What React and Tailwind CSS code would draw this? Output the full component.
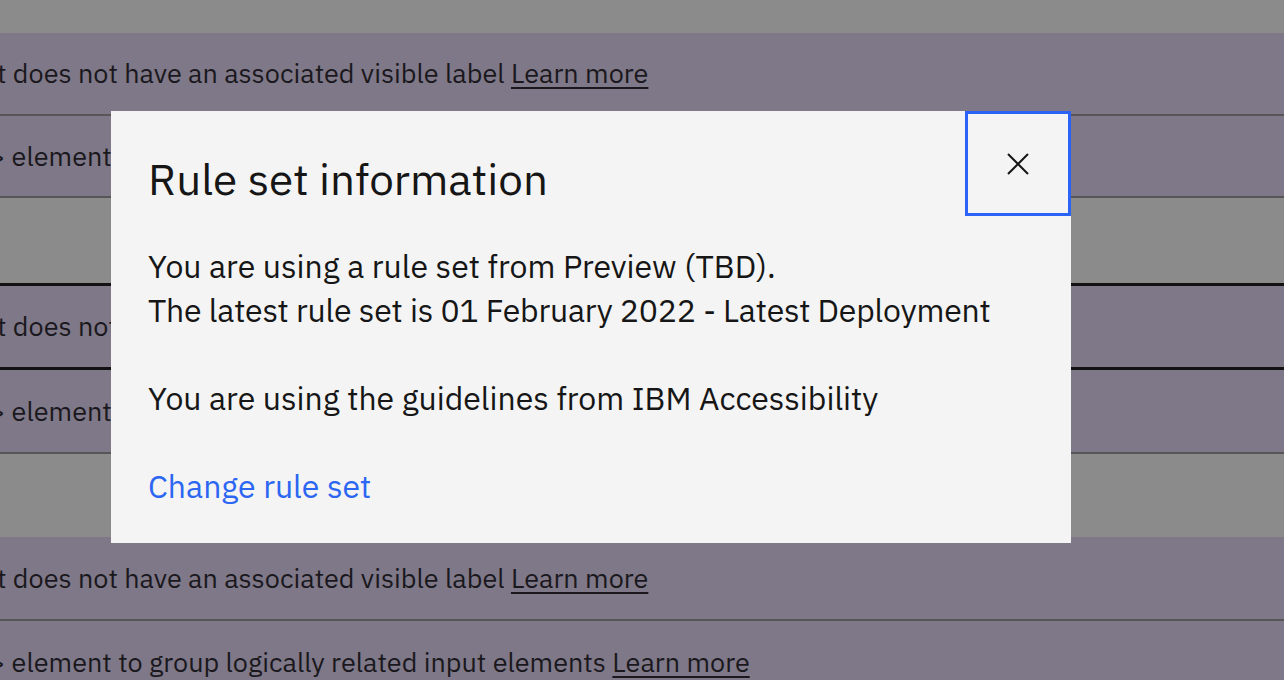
import React from 'react';

const font = { fontFamily: '"IBM Plex Sans", Roboto, "Liberation Sans", sans-serif' };

const Row = ({ text, offset, tone, border }) => (
  <div className={`${tone === 'gray' ? 'bg-[#8b8b8b]' : 'bg-[#7f7888]'} ${border} flex items-center overflow-hidden whitespace-nowrap`}>
    {text && (
      <div className={`${offset} text-[27px] text-[#1a181d]`}>
        {text} <span className="underline underline-offset-[4px]">Learn more</span>
      </div>
    )}
  </div>
);

export default function App() {
  return (
    <div className="relative w-[1284px] h-[680px] overflow-hidden bg-[#8b8b8b]" style={font}>
      <div className="flex flex-col">
        <div className="h-[33px] bg-[#8b8b8b]" />
        <Row tone="purple" border="h-[83px] border-b-2 border-[#565656]" offset="-ml-[3px]" text="t does not have an associated visible label" />
        <Row tone="purple" border="h-[82px] border-b-2 border-[#565656]" offset="-ml-[11px]" text="> element to group logically related input elements" />
        <Row tone="gray" border="h-[88px] border-b-[3px] border-[#121212]" />
        <Row tone="purple" border="h-[84px] border-b-[3px] border-[#121212]" offset="-ml-[3px]" text="t does not have an associated visible label" />
        <Row tone="purple" border="h-[84px] border-b-2 border-[#565656]" offset="-ml-[11px]" text="> element to group logically related input elements" />
        <Row tone="gray" border="h-[83px]" />
        <Row tone="purple" border="h-[84px] border-b-2 border-[#565656]" offset="-ml-[3px]" text="t does not have an associated visible label" />
        <Row tone="purple" border="h-[82px]" offset="-ml-[11px]" text="> element to group logically related input elements" />
      </div>

      <div className="absolute left-[111px] top-[111px] w-[960px] h-[432px] bg-[#f4f4f4] text-[#161616]">
        <div className="flex justify-between items-start">
          <h2 className="pl-[37px] pt-[40px] text-[44px] leading-[56px] font-normal">Rule set information</h2>
          <button className="w-[106px] h-[105px] border-[3px] border-[#2a63f6] flex items-center justify-center">
            <svg width="22" height="22" viewBox="0 0 22 22" fill="none" stroke="#161616" strokeWidth="2">
              <path d="M1 1 L21 21 M21 1 L1 21" />
            </svg>
          </button>
        </div>
        <div className="pl-[37px] mt-[28px] text-[32px] leading-[44px]">
          <div>You are using a rule set from Preview (TBD).</div>
          <div className="tracking-[-0.2px]">The latest rule set is 01 February 2022 - Latest Deployment</div>
          <div className="h-[44px]" />
          <div>You are using the guidelines from IBM Accessibility</div>
          <div className="h-[44px]" />
          <a className="text-[#2c66f2]">Change rule set</a>
        </div>
      </div>
    </div>
  );
}
